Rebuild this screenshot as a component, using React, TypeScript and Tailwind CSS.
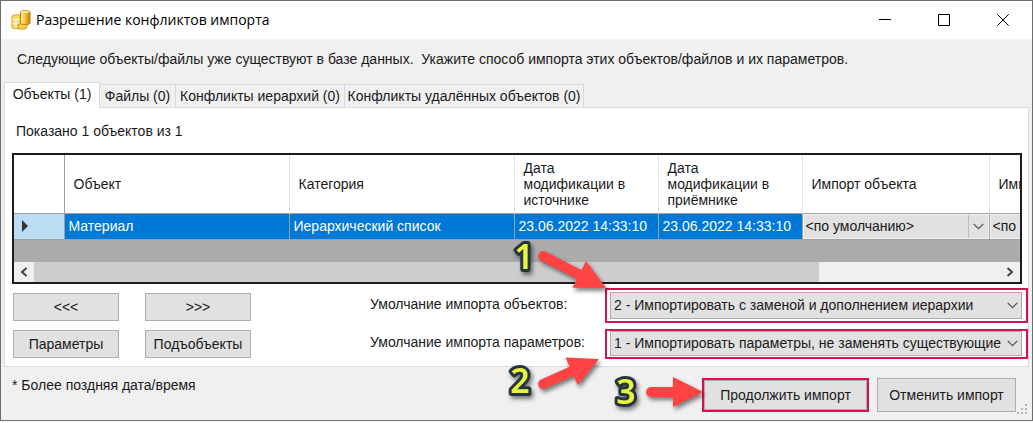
import { useState } from 'react';
import type { ReactNode } from 'react';
import clsx from 'clsx';

const TABS = [
  { id: 'objects', label: 'Объекты (1)', width: 'w-24' },
  { id: 'files', label: 'Файлы (0)', width: 'w-[76px]' },
  { id: 'hierarchy', label: 'Конфликты иерархий (0)', width: 'w-[169px]' },
  { id: 'deleted', label: 'Конфликты удалённых объектов (0)', width: 'w-[239px]' },
];

const COLUMNS = [
  { title: 'Объект', width: 'w-[225px]' },
  { title: 'Категория', width: 'w-[225px]' },
  { title: 'Дата модификации в источнике', width: 'w-36' },
  { title: 'Дата модификации в приёмнике', width: 'w-36' },
  { title: 'Импорт объекта', width: 'w-[187px]' },
  { title: 'Импорт параметров', width: 'w-[187px]' },
];

const ROWS = [
  {
    id: 1,
    cells: ['Материал', 'Иерархический список', '23.06.2022 14:33:10', '23.06.2022 14:33:10'],
  },
];

const Chevron = () => (
  <svg viewBox="0 0 11 7" className="h-[7px] w-[11px]" fill="none" stroke="#555" strokeWidth="1.3">
    <path d="M.7.9 5.5 5.7 10.3.9" />
  </svg>
);

const DatabaseIcon = () => (
  <svg viewBox="0 0 20 20" className="h-5 w-5">
    <defs>
      <linearGradient id="gold" x1="0" x2="1" y1="0" y2="0">
        <stop offset="0" stopColor="#fff0a8" />
        <stop offset=".45" stopColor="#f8c93c" />
        <stop offset="1" stopColor="#c9780c" />
      </linearGradient>
    </defs>
    <path d="M1 6.500Q1 5 4 5h5v13.500H3.500q-2.500 0-2.500-1.500z" fill="#fbd95f" stroke="#e0a021" />
    <path d="M1.500 9.500H9M1.500 13.500H9M5 10v8" stroke="#fff6cf" strokeWidth="1.500" />
    <path d="M7 14h9v3.500l-2 1.500H7z" fill="#fbd24e" stroke="#d8921a" />
    <path d="M9.500 1.800Q9.500 .7 14.300.7T19 1.800v11.500q0 1.200-4.700 1.200t-4.800-1.200z" fill="url(#gold)" stroke="#c27a0e" />
    <ellipse cx="14.300" cy="2" rx="4.200" ry="1" fill="#fff0b0" />
  </svg>
);

const TextButton = ({ children, className }: { children: ReactNode; className?: string }) => (
  <button
    type="button"
    className={clsx('border border-[#adadad] bg-[#e1e1e1] text-center whitespace-nowrap hover:border-[#0078d7]', className)}
  >
    {children}
  </button>
);

const CellSelect = ({ label }: { label: string }) => (
  <div className="relative h-[25px] border border-[#f4f4f4] bg-[#e1e1e1]">
    <select aria-label={label} className="h-full w-full appearance-none pl-0.5 outline-none">
      <option>&lt;по умолчанию&gt;</option>
      <option>Импортировать с заменой</option>
      <option>Не импортировать</option>
    </select>
    <span className="pointer-events-none absolute inset-y-0 right-0 flex w-5 items-center justify-center border-l border-[#bdbdbd]">
      <Chevron />
    </span>
  </div>
);

type DefaultSelectProps = { id: string; options: string[]; className: string };

const DefaultSelect = ({ id, options, className }: DefaultSelectProps) => (
  <div className="relative">
    <select
      id={id}
      className={clsx('w-full appearance-none border border-[#adadad] bg-[#e1e1e1] pr-4 pl-[3px] outline-none', className)}
    >
      {options.map((option) => (
        <option key={option}>{option}</option>
      ))}
    </select>
    <span className="pointer-events-none absolute inset-y-0 right-0 flex w-5 items-center justify-center">
      <Chevron />
    </span>
  </div>
);

// Numbered hint: a digit at (x, y) and an arrow that runs from `from` to `tip`
type StepProps = {
  step: string;
  x: number;
  y: number;
  from: [number, number];
  tip: [number, number];
  className: string;
};

const Step = ({ step, x, y, from, tip, className }: StepProps) => {
  const length = Math.hypot(tip[0] - from[0], tip[1] - from[1]);
  const angle = (Math.atan2(tip[1] - from[1], tip[0] - from[0]) * 180) / Math.PI;

  return (
    <svg
      viewBox="0 0 110 80"
      className={clsx('pointer-events-none absolute z-10 h-20 w-[110px] overflow-visible', className)}
    >
      <g className="drop-shadow-[2px_3px_2px_rgba(0,0,0,0.5)]">
        <text
          x={x}
          y={y}
          textAnchor="middle"
          fill="#e6f542"
          stroke="#26343f"
          strokeWidth="6"
          strokeLinejoin="round"
          paintOrder="stroke"
          className="font-['Noto_Sans',sans-serif] text-[34px] font-semibold"
        >
          {step}
        </text>
      </g>
      <g className="drop-shadow-[2px_3px_2px_rgba(0,0,0,0.5)]">
        <g transform={`translate(${from[0]} ${from[1]}) rotate(${angle})`} fill="#ff4343">
          <path d={`M0 0H${length - 24}`} stroke="#ff4343" strokeWidth="10" strokeLinecap="round" />
          <path d={`M${length - 30} -15 ${length} 0 ${length - 30} 15z`} />
        </g>
      </g>
    </svg>
  );
};

export default function App() {
  const [activeTab, setActiveTab] = useState('objects');

  return (
    <div className="bg-[#f0f0f0] border border-[#6e6c6e] font-['Liberation_Sans',Arial,sans-serif] text-[14px] leading-5 text-[#1a1a1a]">
      {/* Title bar */}
      <header className="flex h-[38px] items-center bg-white pl-[10px] text-black">
        <DatabaseIcon />
        <h1 className="flex-1 pl-[5px] font-['Open_Sans','Noto_Sans',sans-serif] text-[14px]">
          Разрешение конфликтов импорта
        </h1>
        <button type="button" aria-label="Свернуть" className="flex h-full w-[59px] items-center justify-center">
          <svg viewBox="0 0 12 12" className="h-3 w-3" stroke="#000"><path d="M0 5.500h12" /></svg>
        </button>
        <button type="button" aria-label="Развернуть" className="flex h-full w-[59px] items-center justify-center">
          <svg viewBox="0 0 12 12" className="h-3 w-3" stroke="#000" fill="none"><path d="M.5.5h11v11H.5z" /></svg>
        </button>
        <button type="button" aria-label="Закрыть" className="flex h-full w-[59px] items-center justify-center">
          <svg viewBox="0 0 12 12" className="h-3 w-3" stroke="#000"><path d="m.3.3 11.400 11.400M11.700.3.3 11.700" /></svg>
        </button>
      </header>

      <p className="whitespace-pre px-4 pt-[10px] pb-[13px]">
        {'Следующие объекты/файлы уже существуют в базе данных.  Укажите способ импорта этих объектов/файлов и их параметров.'}
      </p>

      <main className="px-[3px]">
        <div role="tablist" className="flex items-end">
          {TABS.map((tab) => (
            <button
              key={tab.id}
              type="button"
              role="tab"
              aria-selected={tab.id === activeTab}
              onClick={() => setActiveTab(tab.id)}
              className={clsx(
                'border-x border-t border-[#d9d9d9] text-center whitespace-nowrap',
                tab.width,
                tab.id === activeTab ? '-mb-px h-[26px] bg-white pb-1' : 'h-[23px] border-l-0 bg-[#f0f0f0]'
              )}
            >
              {tab.label}
            </button>
          ))}
        </div>

        <section className="border border-[#dcdcdc] bg-white pt-[13px] pb-[7px] pl-[7px]">
          <p className="pb-3 pl-1">Показано 1 объектов из 1</p>

          {/* Conflicts grid */}
          <div className="mr-[6px] overflow-hidden border-2 border-[#1c1c1c] bg-[#ababab]">
            <table className="w-[1162px] table-fixed border-collapse">
              <thead className="bg-white text-left">
                <tr className="h-[58px] border-b border-[#a0a0a0]">
                  <th className="w-[50px] border-r border-[#a0a0a0]" aria-label="Строка" />
                  {COLUMNS.map((column) => (
                    <th
                      key={column.title}
                      className={clsx('border-r border-[#e2e2e2] pr-5 pl-[9px] leading-4 font-normal', column.width)}
                    >
                      {column.title}
                    </th>
                  ))}
                </tr>
              </thead>
              <tbody>
                {ROWS.map((row) => (
                  <tr key={row.id} className="h-[26px] border-b border-[#a0a0a0]">
                    <td className="border-r border-[#a0a0a0] bg-[#bcdcf4] pl-2">
                      <svg viewBox="0 0 6 12" className="h-3 w-[6px]" fill="#333"><path d="M0 0 6 6 0 12z" /></svg>
                    </td>
                    {row.cells.map((cell, index) => (
                      <td
                        key={index}
                        className="border-r border-[#a0a0a0] bg-[#0078d7] pl-1 whitespace-nowrap text-white"
                      >
                        {cell}
                      </td>
                    ))}
                    <td className="border-r border-[#a0a0a0] p-0"><CellSelect label="Импорт объекта" /></td>
                    <td className="border-r border-[#a0a0a0] p-0"><CellSelect label="Импорт параметров" /></td>
                  </tr>
                ))}
              </tbody>
            </table>
            <div className="mt-[22px] flex h-5 items-stretch bg-[#f0f0f0]">
              <button type="button" aria-label="Прокрутить влево" className="flex w-5 items-center justify-center">
                <svg viewBox="0 0 8 10" className="h-[10px] w-2" fill="none" stroke="#444" strokeWidth="2"><path d="M6.500 1 2 5l4.500 4" /></svg>
              </button>
              <div className="w-[78%] bg-[#cdcdcd]" />
              <span className="flex-1" />
              <button type="button" aria-label="Прокрутить вправо" className="flex w-5 items-center justify-center">
                <svg viewBox="0 0 8 10" className="h-[10px] w-2" fill="none" stroke="#444" strokeWidth="2"><path d="m1.500 1 4.500 4-4.500 4" /></svg>
              </button>
            </div>
          </div>

          <div className="flex pt-1 pl-px">
            <div className="grid grid-cols-2 gap-x-[26px] gap-y-[9px] pt-[5px]">
              <TextButton className="h-7 w-[106px]">&lt;&lt;&lt;</TextButton>
              <TextButton className="h-7 w-[106px]">&gt;&gt;&gt;</TextButton>
              <TextButton className="h-7 w-[106px]">Параметры</TextButton>
              <TextButton className="h-7 w-[106px]">Подъобъекты</TextButton>
            </div>
            <div className="grid flex-1 grid-cols-[235px_1fr] gap-y-[6px] pl-[119px]">
              <label htmlFor="default-objects" className="pt-[6px]">Умолчание импорта объектов:</label>
              <div className="relative border-2 border-[#d4144c] py-[2px] pr-1 pl-[3px]">
                <DefaultSelect
                  id="default-objects"
                  className="h-[27px]"
                  options={['2 - Импортировать с заменой и дополнением иерархии', '1 - Не импортировать']}
                />
                <Step step="1" x={27} y={36} from={[46, 23]} tip={[109, 55]} className="right-full bottom-2" />
              </div>
              <label htmlFor="default-params" className="pt-[3px]">Умолчание импорта параметров:</label>
              <div className="relative border-2 border-[#d4144c] pr-1 pb-px pl-[3px]">
                <DefaultSelect
                  id="default-params"
                  className="h-[25px]"
                  options={['1 - Импортировать параметры, не заменять существующие', '2 - Заменять существующие']}
                />
                <Step step="2" x={23} y={42} from={[46, 33]} tip={[102, 8]} className="top-5 right-full" />
              </div>
            </div>
          </div>
        </section>
      </main>

      <footer className="relative flex items-start gap-2 pt-2 pr-4 pb-2 pl-[11px]">
        <p className="flex-1">* Более поздняя дата/время</p>
        <div className="relative mt-[3px] border-2 border-[#d4144c]">
          <TextButton className="h-[30px] w-[163px]">Продолжить импорт</TextButton>
          <Step step="3" x={32} y={62} from={[57, 50]} tip={[109, 50]} className="right-full bottom-[-12px]" />
        </div>
        <TextButton className="mt-[3px] h-[34px] w-[139px]">Отменить импорт</TextButton>
        <svg viewBox="0 0 12 12" className="absolute right-[3px] bottom-1 h-3 w-3" fill="#b5b5b5">
          <path d="M8 0h2v2H8zM4 4h2v2H4zM8 4h2v2H8zM0 8h2v2H0zM4 8h2v2H4zM8 8h2v2H8z" />
        </svg>
      </footer>
    </div>
  );
}
